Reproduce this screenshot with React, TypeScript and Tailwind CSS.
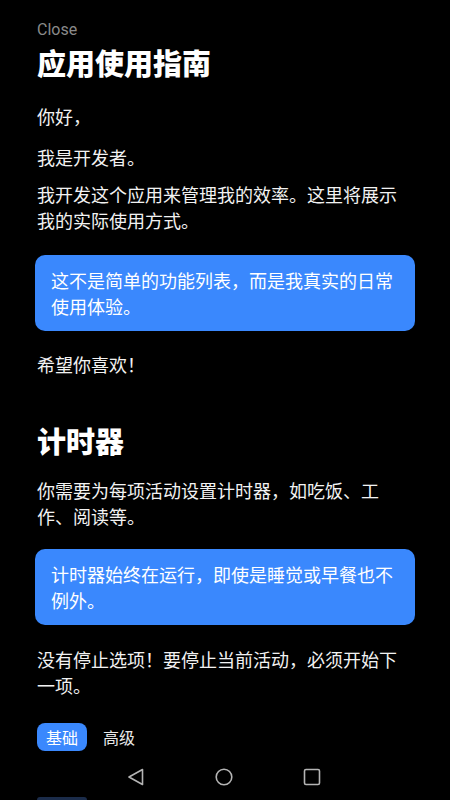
import { useState } from "react";

const cjk = { fontFamily: '"Noto Sans CJK SC", "Noto Sans", sans-serif' };

export default function App() {
  const [tab, setTab] = useState("basic");

  return (
    <div
      className="flex h-[800px] w-[450px] flex-col overflow-hidden bg-black text-[#f2f2f2]"
      style={cjk}
    >
      <div className="flex-1 px-[37px]">
        <div
          className="mt-[20px] text-[16px] leading-[20px] text-[#8a8a8a]"
          style={{ fontFamily: "Roboto, sans-serif" }}
        >
          Close
        </div>
        <h1 className="mt-[4px] text-[29px] font-black leading-[36px] text-white">
          应用使用指南
        </h1>

        <div className="text-[18px] leading-[26px]">
          <p className="mt-[23px]">你好，</p>
          <p className="mt-[15px]">我是开发者。</p>
          <p className="mt-[11px]">
            我开发这个应用来管理我的效率。这里将展示我的实际使用方式。
          </p>
          <div className="mx-[-2px] mt-[22px] rounded-[10px] bg-[#3a88fd] px-[16px] py-[12px] text-white">
            这不是简单的功能列表，而是我真实的日常使用体验。
          </div>
          <p className="mt-[20px]">希望你喜欢！</p>
        </div>

        <h2 className="mt-[45px] text-[29px] font-black leading-[36px] text-white">
          计时器
        </h2>

        <div className="text-[18px] leading-[26px]">
          <p className="mt-[19px]">
            你需要为每项活动设置计时器，如吃饭、工作、阅读等。
          </p>
          <div className="mx-[-2px] mt-[20px] rounded-[10px] bg-[#3a88fd] px-[16px] py-[12px] text-white">
            计时器始终在运行，即使是睡觉或早餐也不例外。
          </div>
          <p className="mt-[21px]">
            没有停止选项！要停止当前活动，必须开始下一项。
          </p>
        </div>

        <div className="mt-[25px] flex items-center gap-[7px]">
          <button
            onClick={() => setTab("basic")}
            className={
              tab === "basic"
                ? "h-[28px] rounded-[8px] bg-[#3a88fd] px-[9px] text-[16px] leading-[28px] text-white"
                : "h-[28px] rounded-[8px] px-[9px] text-[16px] leading-[28px] text-[#e8e8e8]"
            }
          >
            基础
          </button>
          <button
            onClick={() => setTab("advanced")}
            className={
              tab === "advanced"
                ? "h-[28px] rounded-[8px] bg-[#3a88fd] px-[9px] text-[16px] leading-[28px] text-white"
                : "h-[28px] rounded-[8px] px-[9px] text-[16px] leading-[28px] text-[#e8e8e8]"
            }
          >
            高级
          </button>
        </div>
      </div>

      {/* system nav bar */}
      <div className="flex h-[40px] items-center justify-center gap-[70px] bg-black">
        <svg width="18" height="18" viewBox="0 0 18 18" className="ml-[-2px]">
          <path
            d="M15.5 1.5 L2 9 L15.5 16.5 Z"
            fill="none"
            stroke="#b4b4b4"
            strokeWidth="1.6"
            strokeLinejoin="round"
          />
        </svg>
        <svg width="18" height="18" viewBox="0 0 18 18">
          <circle cx="9" cy="9" r="7.8" fill="none" stroke="#b4b4b4" strokeWidth="1.6" />
        </svg>
        <svg width="18" height="18" viewBox="0 0 18 18">
          <rect
            x="1.5"
            y="1.5"
            width="15"
            height="15"
            rx="1.5"
            fill="none"
            stroke="#b4b4b4"
            strokeWidth="1.6"
          />
        </svg>
      </div>
      <div className="h-[3px] px-[37px]">
        <div className="h-[3px] w-[50px] rounded-t-[3px] bg-[#1b2c4a]" />
      </div>
    </div>
  );
}
